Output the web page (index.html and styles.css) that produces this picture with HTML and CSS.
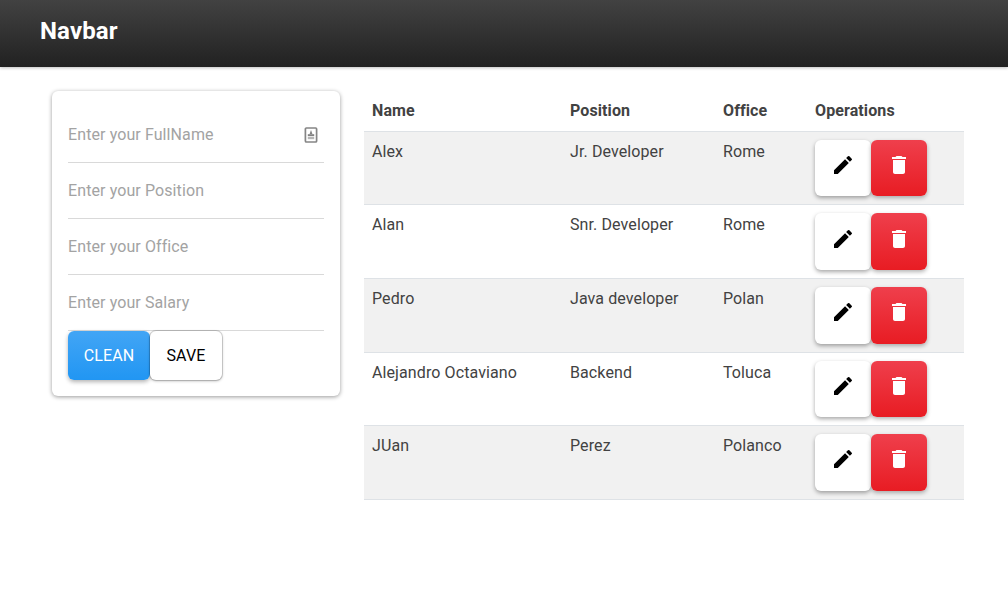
FILE: index.html
```html
<!DOCTYPE html>
<html lang="en">
<head>
<meta charset="utf-8">
<title>Navbar</title>
<link rel="stylesheet" href="styles.css">
</head>
<body>
<header class="navbar"><span class="brand">Navbar</span></header>
<main class="content">
  <form class="card">
    <div class="field">
      <input class="input" type="text" placeholder="Enter your FullName">
      <svg class="field-icon" width="14" height="16" viewBox="0 0 14 16"><rect x="1.4" y="1" width="11.2" height="14" rx="1" fill="none" stroke="#858585" stroke-width="1.7"/><path d="M7 3l1.4 4H5.6z" fill="#808080"/><rect x="3.8" y="7.2" width="6.4" height="2" fill="#808080"/><rect x="3.8" y="10" width="6.4" height="2.2" fill="#b5b5b5"/></svg>
    </div>
    <div class="field"><input class="input" type="text" placeholder="Enter your Position"></div>
    <div class="field"><input class="input" type="text" placeholder="Enter your Office"></div>
    <div class="field"><input class="input" type="text" placeholder="Enter your Salary"></div>
    <div class="actions">
      <button class="btn btn-primary" type="button">CLEAN</button>
      <button class="btn btn-light" type="button">SAVE</button>
    </div>
  </form>
  <section class="table">
    <div class="row row-head"><div>Name</div><div>Position</div><div>Office</div><div>Operations</div></div>
    <div class="row"><div>Alex</div><div>Jr. Developer</div><div>Rome</div><div class="ops"><button class="op op-edit" type="button" aria-label="Edit"><svg width="24" height="24" viewBox="0 0 24 24"><path d="M3 17.25V21h3.75L17.81 9.94l-3.75-3.75L3 17.25zM20.71 7.04a1 1 0 0 0 0-1.41l-2.34-2.34a1 1 0 0 0-1.41 0l-1.83 1.83 3.75 3.75 1.83-1.83z"/></svg></button><button class="op op-del" type="button" aria-label="Delete"><svg width="24" height="24" viewBox="0 0 24 24"><path d="M6 19c0 1.1.9 2 2 2h8c1.1 0 2-.9 2-2V7H6v12zM19 4h-3.5l-1-1h-5l-1 1H5v2h14V4z"/></svg></button></div></div>
    <div class="row"><div>Alan</div><div>Snr. Developer</div><div>Rome</div><div class="ops"><button class="op op-edit" type="button" aria-label="Edit"><svg width="24" height="24" viewBox="0 0 24 24"><path d="M3 17.25V21h3.75L17.81 9.94l-3.75-3.75L3 17.25zM20.71 7.04a1 1 0 0 0 0-1.41l-2.34-2.34a1 1 0 0 0-1.41 0l-1.83 1.83 3.75 3.75 1.83-1.83z"/></svg></button><button class="op op-del" type="button" aria-label="Delete"><svg width="24" height="24" viewBox="0 0 24 24"><path d="M6 19c0 1.1.9 2 2 2h8c1.1 0 2-.9 2-2V7H6v12zM19 4h-3.5l-1-1h-5l-1 1H5v2h14V4z"/></svg></button></div></div>
    <div class="row"><div>Pedro</div><div>Java developer</div><div>Polan</div><div class="ops"><button class="op op-edit" type="button" aria-label="Edit"><svg width="24" height="24" viewBox="0 0 24 24"><path d="M3 17.25V21h3.75L17.81 9.94l-3.75-3.75L3 17.25zM20.71 7.04a1 1 0 0 0 0-1.41l-2.34-2.34a1 1 0 0 0-1.41 0l-1.83 1.83 3.75 3.75 1.83-1.83z"/></svg></button><button class="op op-del" type="button" aria-label="Delete"><svg width="24" height="24" viewBox="0 0 24 24"><path d="M6 19c0 1.1.9 2 2 2h8c1.1 0 2-.9 2-2V7H6v12zM19 4h-3.5l-1-1h-5l-1 1H5v2h14V4z"/></svg></button></div></div>
    <div class="row"><div>Alejandro Octaviano</div><div>Backend</div><div>Toluca</div><div class="ops"><button class="op op-edit" type="button" aria-label="Edit"><svg width="24" height="24" viewBox="0 0 24 24"><path d="M3 17.25V21h3.75L17.81 9.94l-3.75-3.75L3 17.25zM20.71 7.04a1 1 0 0 0 0-1.41l-2.34-2.34a1 1 0 0 0-1.41 0l-1.83 1.83 3.75 3.75 1.83-1.83z"/></svg></button><button class="op op-del" type="button" aria-label="Delete"><svg width="24" height="24" viewBox="0 0 24 24"><path d="M6 19c0 1.1.9 2 2 2h8c1.1 0 2-.9 2-2V7H6v12zM19 4h-3.5l-1-1h-5l-1 1H5v2h14V4z"/></svg></button></div></div>
    <div class="row"><div>JUan</div><div>Perez</div><div>Polanco</div><div class="ops"><button class="op op-edit" type="button" aria-label="Edit"><svg width="24" height="24" viewBox="0 0 24 24"><path d="M3 17.25V21h3.75L17.81 9.94l-3.75-3.75L3 17.25zM20.71 7.04a1 1 0 0 0 0-1.41l-2.34-2.34a1 1 0 0 0-1.41 0l-1.83 1.83 3.75 3.75 1.83-1.83z"/></svg></button><button class="op op-del" type="button" aria-label="Delete"><svg width="24" height="24" viewBox="0 0 24 24"><path d="M6 19c0 1.1.9 2 2 2h8c1.1 0 2-.9 2-2V7H6v12zM19 4h-3.5l-1-1h-5l-1 1H5v2h14V4z"/></svg></button></div></div>
  </section>
</main>
</body>
</html>
```
FILE: styles.css
```css
* { box-sizing: border-box; }
html, body { height: 100%; }
body {
  margin: 0;
  background: #fff;
  color: #424242;
  font-family: Roboto, "Liberation Sans", sans-serif;
  font-size: 16px;
  line-height: 1.5;
  letter-spacing: .1px;
  overflow: hidden;
}
.navbar {
  height: 67px;
  padding: 0 40px;
  display: flex;
  align-items: center;
  background: linear-gradient(to bottom, #424242, #212121);
  box-shadow: 0 1px 3px rgba(0, 0, 0, .25);
}
.brand {
  color: #fff;
  font-size: 24px;
  font-weight: 700;
  line-height: 1;
  letter-spacing: .15px;
  margin-top: -6px;
}
.content {
  display: flex;
  align-items: flex-start;
  padding: 24px 44px 0 52px;
  gap: 24px;
}
.card {
  flex: 0 0 288px;
  width: 288px;
  height: 305px;
  padding: 16px 16px 0;
  background: #fff;
  border-radius: 6px;
  box-shadow: 0 1px 4px rgba(0, 0, 0, .4);
}
.field {
  height: 56px;
  display: flex;
  align-items: center;
  border-bottom: 1px solid #d9d9d9;
  padding: 0 6px 0 0;
}
.input {
  flex: 1;
  min-width: 0;
  border: 0;
  outline: 0;
  padding: 0;
  background: transparent;
  font: inherit;
  letter-spacing: inherit;
  color: #424242;
}
.input::placeholder { color: #a3a3a3; opacity: 1; }
.field-icon { flex: none; margin-left: 8px; }
.actions { display: flex; }
.btn {
  height: 49px;
  border: 0;
  border-radius: 6px;
  font: inherit;
  font-size: 16px;
  letter-spacing: inherit;
  padding: 0;
  cursor: pointer;
}
.btn-primary {
  width: 82px;
  color: #fff;
  background: linear-gradient(to bottom, #42a5f5, #2196f3);
  box-shadow: 0 2px 4px rgba(0, 0, 0, .3);
}
.btn-light {
  width: 72px;
  color: #000;
  background: #fff;
  box-shadow: 0 0 0 1px rgba(0, 0, 0, .14), 0 1px 3px rgba(0, 0, 0, .3);
}
.table { flex: 1; min-width: 0; }
.row {
  display: grid;
  grid-template-columns: 198px 153px 92px 1fr;
  height: 73.6px;
  border-bottom: 1px solid #dee2e6;
}
.row > div { padding: 8px; }
.row:nth-child(even) { background: #f1f1f1; }
.row-head {
  height: 40.8px;
  font-weight: 700;
}
.row > .ops { display: flex; }
.op {
  width: 56px;
  height: 56.6px;
  flex: none;
  border: 0;
  padding: 0 0 6px;
  border-radius: 6px;
  display: flex;
  align-items: center;
  justify-content: center;
  cursor: pointer;
}
.op svg { display: block; }
.op-edit { background: #fff; box-shadow: 0 2px 4px rgba(0, 0, 0, .35); }
.op-edit svg { fill: #000; }
.op-del {
  background: linear-gradient(to bottom, #ef3f4c, #e81c23);
  box-shadow: 0 2px 4px rgba(0, 0, 0, .3);
}
.op-del svg { fill: #fff; }
```
